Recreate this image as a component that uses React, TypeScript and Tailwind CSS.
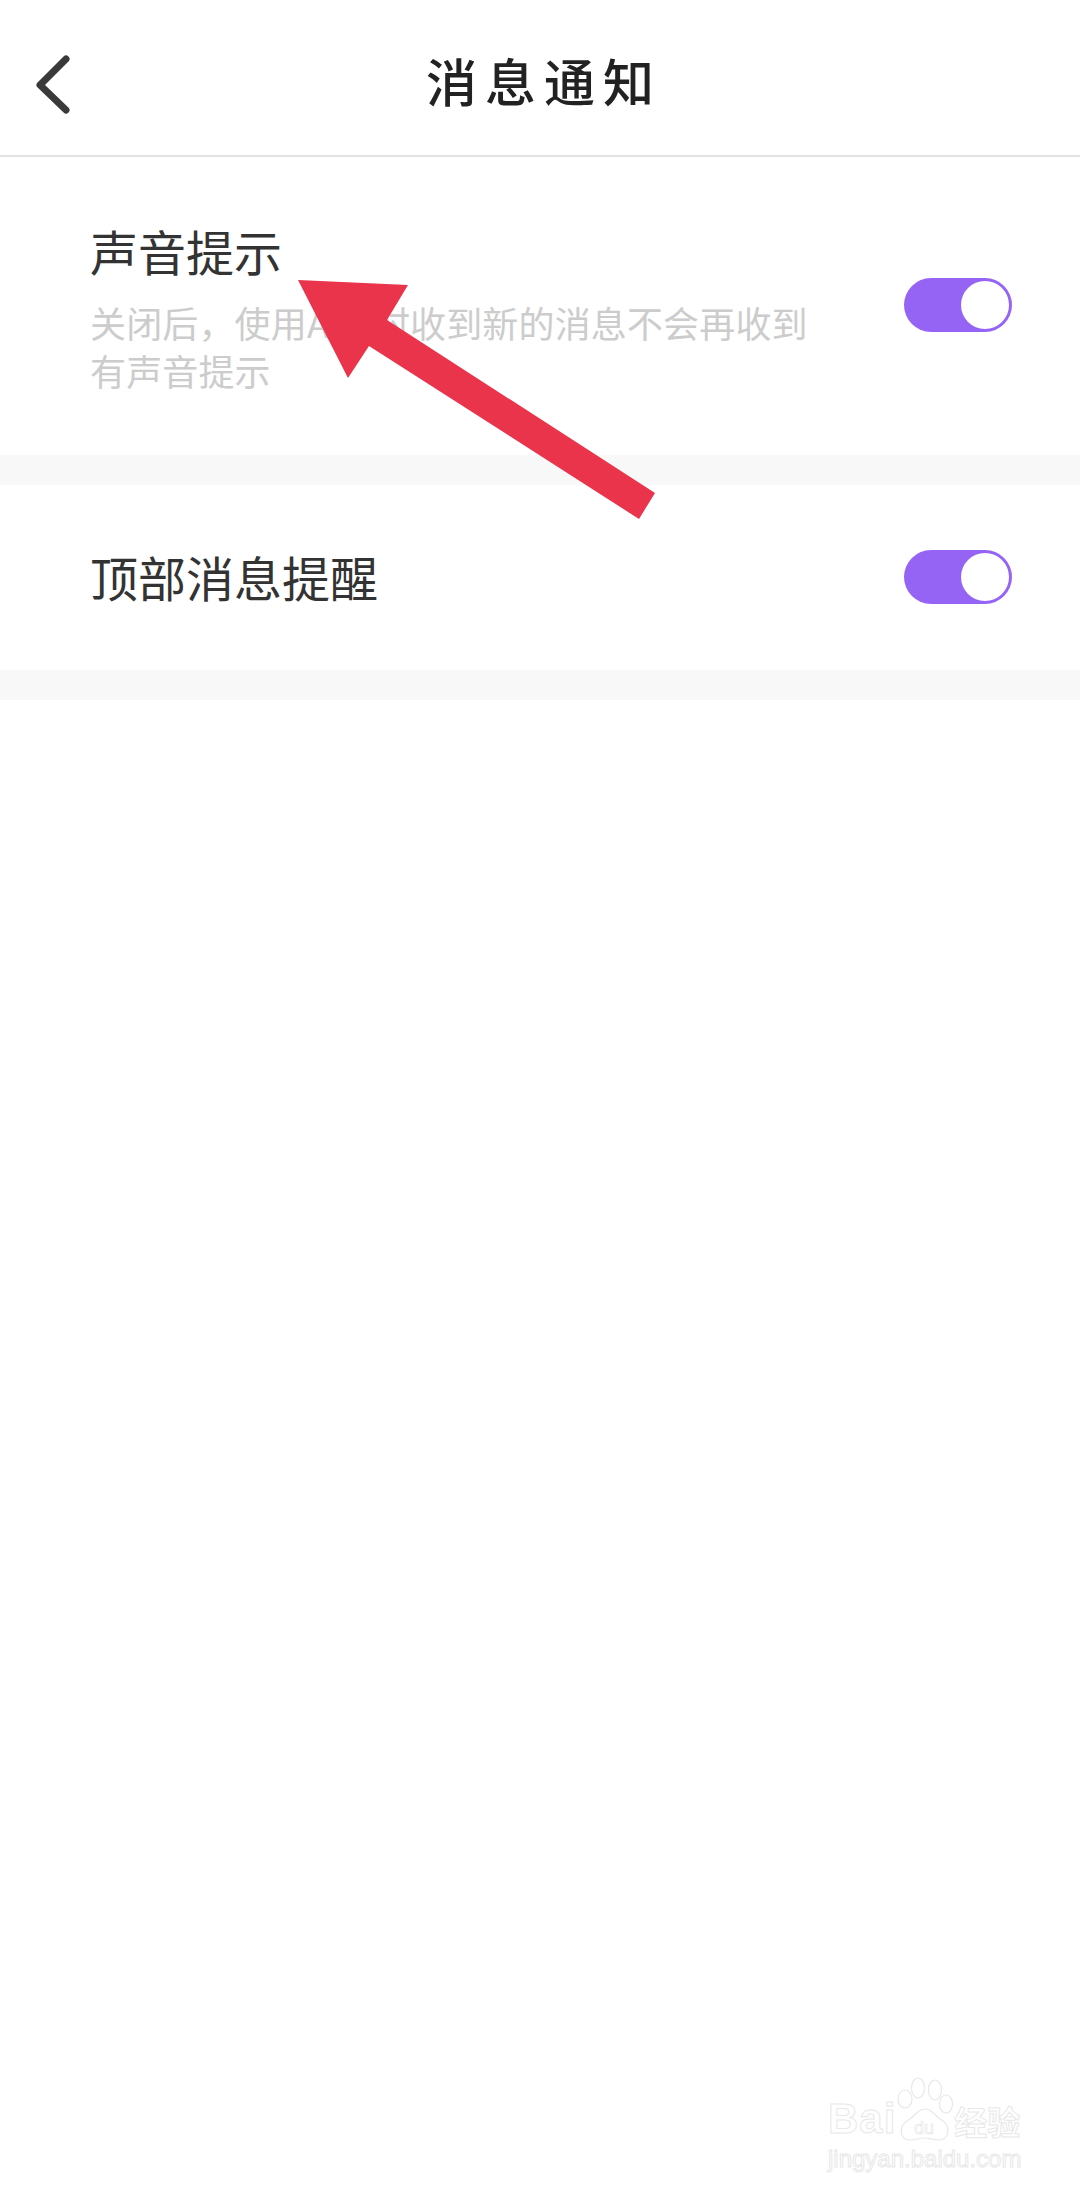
const cjk = "font-['Noto_Sans_CJK_SC','Liberation_Sans',sans-serif]";

const Toggle = () => (
  <div className="flex h-[54px] w-[108px] shrink-0 items-center justify-end rounded-full bg-[#9664f5] pr-[3px]">
    <div className="h-[48px] w-[48px] rounded-full bg-white" />
  </div>
);

const Gap = () => <div className="h-[30px] bg-[#f8f8f8]" />;

const App = () => {
  return (
    <div className={`relative min-h-screen overflow-hidden bg-white ${cjk}`}>
      {/* header */}
      <div className="relative flex h-[157px] items-center justify-center border-b-2 border-[#e2e2e2]">
        <svg className="absolute left-[34px] top-[54px]" width="38" height="62" viewBox="0 0 38 62" fill="none">
          <path d="M32 5 L6 31 L32 56" stroke="#3a3a3a" strokeWidth="7" strokeLinecap="round" strokeLinejoin="round" />
        </svg>
        <h1 className="mt-[6px] pl-[8px] text-[51px] font-medium leading-none tracking-[8px] text-[#222222]">消息通知</h1>
      </div>

      {/* sound */}
      <div className="flex h-[298px] items-start justify-between pl-[90px] pr-[68px]">
        <div className="w-[730px] pt-[61px]">
          <div className="text-[48px] leading-[64px] text-[#333333]">声音提示</div>
          <p className="mt-[16px] w-[722px] text-[36px] leading-[48px] tracking-[0.15px] text-[#cccccc]">
            关闭后，使用App时收到新的消息不会再收到有声音提示
          </p>
        </div>
        <div className="pt-[121px]">
          <Toggle />
        </div>
      </div>
      <Gap />

      {/* top banner */}
      <div className="flex h-[185px] items-center justify-between pb-[2px] pl-[90px] pr-[68px]">
        <div className="mb-[1px] text-[48px] leading-[64px] text-[#333333]">顶部消息提醒</div>
        <Toggle />
      </div>
      <Gap />

      {/* annotation arrow */}
      <svg className="absolute left-0 top-0" width="1080" height="600" viewBox="0 0 1080 600">
        <path d="M298 280 L408 285 L387 320 L655 493 L639 519 L369 346 L348 378 Z" fill="#e9344b" />
      </svg>

      {/* watermark */}
      <div className="absolute left-[828px] top-[2074px] w-[200px] text-white [-webkit-text-stroke:1px_#e8e8e8]">
        <div className="flex h-[66px] items-end">
          <span className="font-['Liberation_Sans',sans-serif] text-[42px] font-bold leading-[42px] tracking-[1px]">Bai</span>
          <svg className="mx-[1px] mb-[-1px]" width="56" height="64" viewBox="0 0 56 64" fill="#ffffff" stroke="#e8e8e8" strokeWidth="1.2">
            <ellipse cx="8" cy="22" rx="7" ry="9" />
            <ellipse cx="21" cy="11" rx="6.5" ry="10" />
            <ellipse cx="38" cy="13" rx="6.5" ry="10" />
            <ellipse cx="49" cy="27" rx="6.5" ry="9" />
            <path d="M28 32 C36 32 38 40 46 44 C54 50 52 63 42 63 C36 63 33 61 28 61 C22 61 19 63 13 63 C3 63 1 50 10 44 C18 40 20 32 28 32 Z" />
            <text x="27" y="57" textAnchor="middle" fontFamily="Liberation Sans" fontSize="18" strokeWidth="0.7">du</text>
          </svg>
          <span className="text-[33px] font-bold leading-[38px]">经验</span>
        </div>
        <div className="mt-[5px] font-['Liberation_Sans',sans-serif] text-[24px] leading-[28px]">jingyan.baidu.com</div>
      </div>
    </div>
  );
};

export default App;
